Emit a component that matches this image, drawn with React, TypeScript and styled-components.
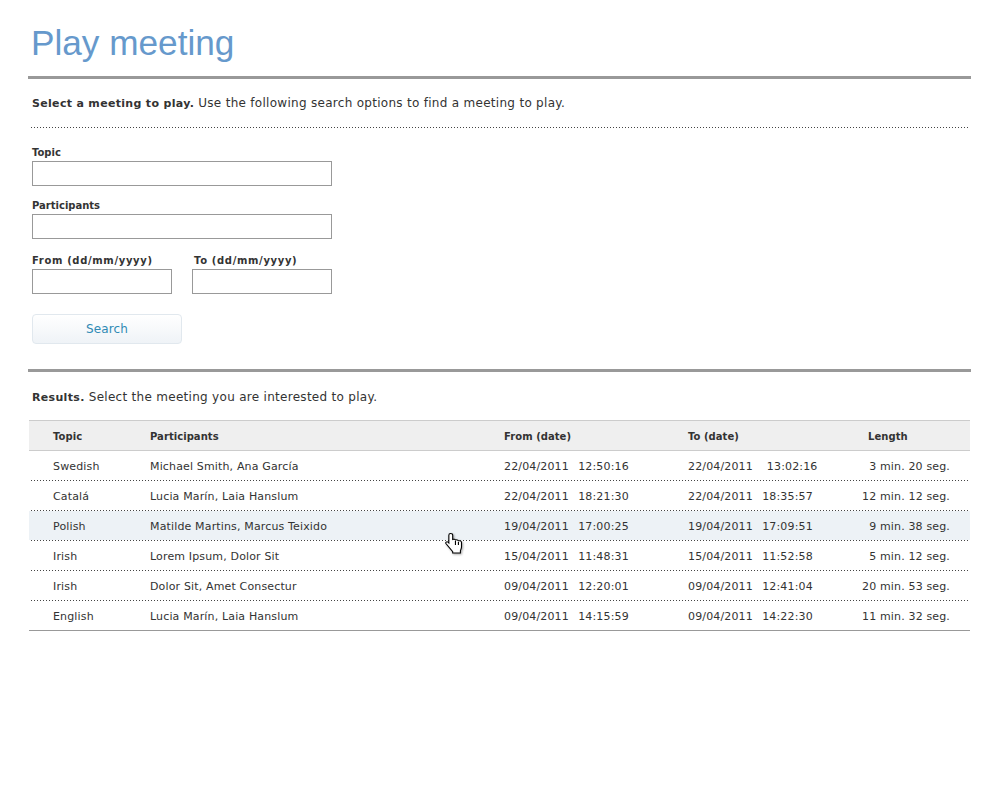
import { Fragment } from "react";
import styled, { createGlobalStyle } from "styled-components";

const GlobalStyle = createGlobalStyle`
	html, body {
		margin: 0;
		padding: 0;
		background: #fff;
	}
	body {
		font-family: "DejaVu Sans", Verdana, sans-serif;
		font-size: 11px;
		color: #333;
	}
`;

const Page = styled.div`
	position: relative;
	width: 1000px;
	height: 800px;
	padding: 0 29px 0 28px;
	box-sizing: border-box;
	overflow: hidden;
`;

const Title = styled.h1`
	margin: 0;
	padding: 22px 0 0 3px;
	height: 54px;
	font-family: "Liberation Sans", Arial, sans-serif;
	font-size: 35.2px;
	line-height: 42px;
	font-weight: normal;
	color: #6699cc;
`;

const Section = styled.section`
	border-top: 3px solid #999;
`;

const Intro = styled.p<{ $top: number }>`
	margin: 0;
	padding: ${(p) => p.$top}px 0 0 4px;
	height: ${(p) => 48 - p.$top}px;
	line-height: 17px;
	font-size: 12px;
	letter-spacing: 0.29px;
	strong {
		font-size: 11px;
		font-weight: bold;
		letter-spacing: 0.32px;
	}
`;

const Divider = styled.div<{ $left: number }>`
	height: 1px;
	margin: 0 2px 0 ${(p) => p.$left}px;
	background-image: linear-gradient(to right, #444 1px, transparent 1px);
	background-size: 3px 1px;
	background-repeat: repeat-x;
`;

const Form = styled.form`
	display: flex;
	flex-direction: column;
	align-items: flex-start;
	padding: 18px 0 25px 4px;
`;

const FieldRow = styled.div<{ $gap: number }>`
	display: flex;
	gap: 20px;
	margin-bottom: ${(p) => p.$gap}px;
`;

const Field = styled.div`
	display: flex;
	flex-direction: column;
`;

const Label = styled.label<{ $date?: boolean; $indent?: number }>`
	font-size: 10px;
	font-weight: bold;
	line-height: 14px;
	margin-bottom: 1px;
	padding-left: ${(p) => p.$indent ?? 0}px;
	letter-spacing: ${(p) => (p.$date ? 0.65 : 0)}px;
`;

const TextInput = styled.input<{ $width: number }>`
	width: ${(p) => p.$width}px;
	height: 25px;
	box-sizing: border-box;
	border: 1px solid #999;
	background: #fff;
	padding: 0 4px;
	margin: 0;
	outline: none;
`;

const SearchButton = styled.button`
	width: 150px;
	height: 30px;
	margin-top: 7px;
	border: 1px solid #e1e8ee;
	border-radius: 4px;
	background: linear-gradient(#ffffff, #eff3f7);
	color: #2f8ab5;
	font-family: inherit;
	font-size: 12px;
	letter-spacing: 0.1px;
	padding: 0;
	text-align: center;
`;

const Results = styled.div`
	margin-left: 1px;
	width: 941px;
`;

const columns = "121px 354px 184px 160px 122px";

const HeadRow = styled.div`
	display: grid;
	grid-template-columns: ${columns};
	align-items: center;
	height: 29px;
	background: #efefef;
	border-top: 1px solid #ccc;
	border-bottom: 1px solid #ccc;
	font-size: 10px;
	font-weight: bold;
	letter-spacing: 0.05px;
`;

const HeadCell = styled.div<{ $pad?: number }>`
	padding: 1px 0 0 ${(p) => p.$pad ?? 0}px;
`;

const Row = styled.div<{ $active?: boolean }>`
	display: grid;
	grid-template-columns: ${columns};
	align-items: center;
	height: 29px;
	background: ${(p) => (p.$active ? "#edf2f6" : "transparent")};
	font-size: 11px;
	letter-spacing: 0.15px;
`;

const Cell = styled.div<{ $pad?: number; $right?: boolean; $date?: boolean }>`
	padding: 1px ${(p) => (p.$right ? 20 : 0)}px 0 ${(p) => p.$pad ?? 0}px;
	text-align: ${(p) => (p.$right ? "right" : "left")};
	word-spacing: ${(p) => (p.$date ? 1 : 0)}px;
	white-space: pre;
`;

const TableEnd = styled.div`
	border-top: 1px solid #999;
`;

const Pointer = styled.svg`
	position: absolute;
	left: 445px;
	top: 532px;
	filter: drop-shadow(1px 1px 1px rgba(0, 0, 0, 0.35));
`;

const meetings = [
	["Swedish", "Michael Smith, Ana García", "22/04/2011  12:50:16", "22/04/2011   13:02:16", "3 min. 20 seg."],
	["Catalá", "Lucia Marín, Laia Hanslum", "22/04/2011  18:21:30", "22/04/2011  18:35:57", "12 min. 12 seg."],
	["Polish", "Matilde Martins, Marcus Teixido", "19/04/2011  17:00:25", "19/04/2011  17:09:51", "9 min. 38 seg."],
	["Irish", "Lorem Ipsum, Dolor Sit", "15/04/2011  11:48:31", "15/04/2011  11:52:58", "5 min. 12 seg."],
	["Irish", "Dolor Sit, Amet Consectur", "09/04/2011  12:20:01", "09/04/2011  12:41:04", "20 min. 53 seg."],
	["English", "Lucia Marín, Laia Hanslum", "09/04/2011  14:15:59", "09/04/2011  14:22:30", "11 min. 32 seg."],
];

const App = () => {
	return (
		<Page>
			<GlobalStyle />
			<Title>Play meeting</Title>
			<Section>
				<Intro $top={16}>
					<strong>Select a meeting to play.</strong> Use the following search options to find a meeting to play.
				</Intro>
				<Divider $left={3} />
				<Form>
					<FieldRow $gap={13}>
						<Field>
							<Label>Topic</Label>
							<TextInput $width={300} />
						</Field>
					</FieldRow>
					<FieldRow $gap={15}>
						<Field>
							<Label>Participants</Label>
							<TextInput $width={300} />
						</Field>
					</FieldRow>
					<FieldRow $gap={13}>
						<Field>
							<Label $date>From (dd/mm/yyyy)</Label>
							<TextInput $width={140} />
						</Field>
						<Field>
							<Label $date $indent={2}>To (dd/mm/yyyy)</Label>
							<TextInput $width={140} />
						</Field>
					</FieldRow>
					<SearchButton type="button">Search</SearchButton>
				</Form>
			</Section>
			<Section>
				<Intro $top={17}>
					<strong>Results.</strong> Select the meeting you are interested to play.
				</Intro>
				<Results>
					<HeadRow>
						<HeadCell $pad={24}>Topic</HeadCell>
						<HeadCell>Participants</HeadCell>
						<HeadCell>From (date)</HeadCell>
						<HeadCell>To (date)</HeadCell>
						<HeadCell $pad={20}>Length</HeadCell>
					</HeadRow>
					{meetings.map((m, i) => (
						<Fragment key={i}>
							<Row $active={i === 2}>
								<Cell $pad={24}>{m[0]}</Cell>
								<Cell>{m[1]}</Cell>
								<Cell $date>{m[2]}</Cell>
								<Cell $date>{m[3]}</Cell>
								<Cell $right>{m[4]}</Cell>
							</Row>
							{i < meetings.length - 1 && <Divider $left={2} />}
						</Fragment>
					))}
					<TableEnd />
				</Results>
			</Section>
			<Pointer width="22" height="25" viewBox="0 0 20 25" preserveAspectRatio="none">
				<path
					d="M5 1.5c1.2 0 2 .7 2 1.8v4.2c1-.5 2.3-.3 2.6.6.9-.5 2.3-.2 2.6.8 1-.5 2.8 0 2.8 1.6v4.6c0 1.6-.8 2.6-1 3.6v2.3H7v-1.3L1 11.8c-.9-1.3.5-2.6 1.7-1.7L3.5 11V3.3c0-1 .5-1.8 1.5-1.8z"
					fill="#fff"
					stroke="#000"
					strokeWidth="1"
				/>
				<path d="M9.5 9v4M12.2 10v3" stroke="#000" strokeWidth="1" fill="none" />
			</Pointer>
		</Page>
	);
};

export default App;
